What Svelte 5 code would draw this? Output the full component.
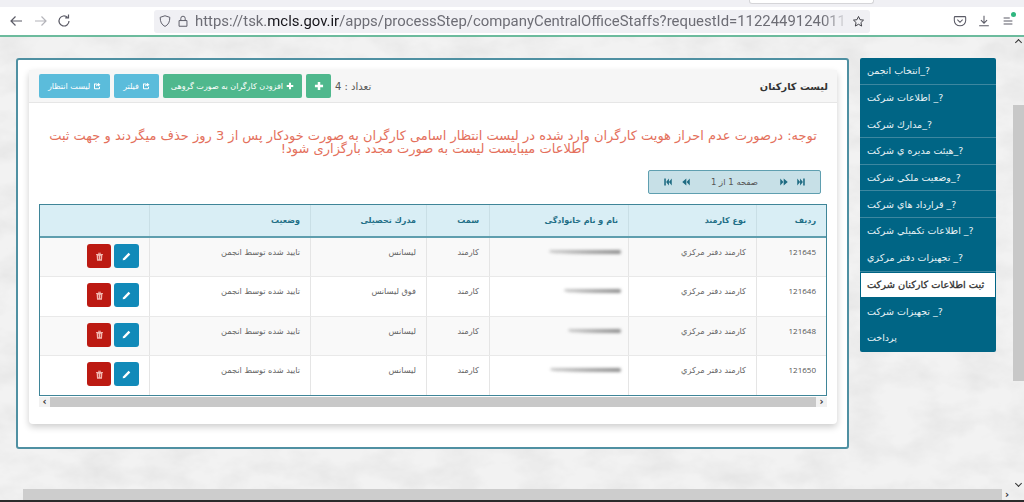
<script lang="ts">
  type Staff = {
    id: number;
    job: string;
    role: string;
    degree: string;
    status: string;
    blur: string;
  };

  const steps = [
    { label: "?_انتخاب انجمن" },
    { label: "?_ اطلاعات شركت" },
    { label: "?_مدارك شركت" },
    { label: "?_هيئت مديره ي شركت" },
    { label: "?_وضعيت ملكي شركت" },
    { label: "?_ قرارداد هاي شركت" },
    { label: "?_ اطلاعات تكميلي شركت" },
    { label: "?_ تجهيزات دفتر مركزي" },
    { label: "ثبت اطلاعات كاركنان شركت", active: true },
    { label: "?_ تجهيزات شركت" },
    { label: "پرداخت" },
  ];

  const staff: Staff[] = [
    { id: 121645, job: "كارمند دفتر مركزي", role: "كارمند", degree: "ليسانس", status: "تاييد شده توسط انجمن", blur: "name-a" },
    { id: 121646, job: "كارمند دفتر مركزي", role: "كارمند", degree: "فوق ليسانس", status: "تاييد شده توسط انجمن", blur: "name-b" },
    { id: 121648, job: "كارمند دفتر مركزي", role: "كارمند", degree: "ليسانس", status: "تاييد شده توسط انجمن", blur: "name-c" },
    { id: 121650, job: "كارمند دفتر مركزي", role: "كارمند", degree: "ليسانس", status: "تاييد شده توسط انجمن", blur: "name-d" },
  ];
</script>

{#snippet share()}
  <svg class="fa" viewBox="0 0 16 16" aria-hidden="true">
    <path d="M2.500 3h6v2H4v7.500h8V9.500h2v3.200c0 .9-.8 1.800-1.800 1.800H3.800C2.800 14.500 2 13.700 2 12.700V4.500C2 3.600 2 3 2.500 3z" fill="currentColor" />
    <path d="M10 1.500l5 3.800-5 3.800V6.900C8 6.900 6.800 7.600 6 9.300c0-3 1.500-5.100 4-5.300z" fill="currentColor" />
  </svg>
{/snippet}

{#snippet plus()}
  <svg class="fa" viewBox="0 0 16 16" aria-hidden="true">
    <path d="M6 1.500h4V6h4.500v4H10v4.500H6V10H1.500V6H6z" fill="currentColor" />
  </svg>
{/snippet}

<div class="screen">
  <header class="browser">
    <div class="tabstrip"><span class="tab-end"></span></div>
    <div class="toolbar">
      <svg class="nav" viewBox="0 0 16 16" aria-hidden="true">
        <path d="M14 8H3M7.500 3.500L3 8l4.500 4.500" stroke="#5b5b66" />
      </svg>
      <svg class="nav next" viewBox="0 0 16 16" aria-hidden="true">
        <path d="M2 8h11M8.500 3.500L13 8l-4.500 4.500" stroke="#b4b4ba" />
      </svg>
      <svg class="nav reload" viewBox="0 0 16 16" aria-hidden="true">
        <path d="M13 8a5 5 0 1 1-1.600-3.700M12.500 1.500v3.300H9.200" stroke="#5b5b66" />
      </svg>
      <div class="urlbar">
        <svg class="url-icon" viewBox="0 0 16 16" aria-hidden="true">
          <path d="M8 2l5.500 1.800c0 5-1.500 8.500-5.500 10.400C4 12.300 2.500 8.800 2.500 3.800z" stroke="#5b5b66" />
        </svg>
        <svg class="url-icon" viewBox="0 0 16 16" aria-hidden="true">
          <path d="M3.500 7.500h9v6.500h-9zM5.500 7.500V5a2.500 2.500 0 0 1 5 0v2.500" stroke="#5b5b66" />
        </svg>
        <div class="url">https://tsk.<b>mcls.gov.ir</b>/apps/processStep/companyCentralOfficeStaffs?requestId=1122449124011</div>
        <svg class="url-star" viewBox="0 0 16 16" aria-hidden="true">
          <path d="M8 1.800l1.900 4 4.300.5-3.200 3 .9 4.300L8 11.400l-3.900 2.200.9-4.300-3.200-3 4.300-.5z" stroke="#3f3f46" />
        </svg>
      </div>
      <div class="tools">
        <svg class="nav" viewBox="0 0 16 16" aria-hidden="true">
          <path d="M2.500 3h11c.6 0 1 .4 1 1v3.500c0 3.300-3 6-6.500 6s-6.500-2.700-6.500-6V4c0-.6.400-1 1-1zM5 6.500L8 9.500l3-3" stroke="#5b5b66" />
        </svg>
        <svg class="nav" viewBox="0 0 16 16" aria-hidden="true">
          <path d="M8 2v8.500M4.500 7L8 10.500 11.500 7M2.500 13.500h11" stroke="#5b5b66" />
        </svg>
        <span class="menu">
          <svg class="nav" viewBox="0 0 16 16" aria-hidden="true">
            <path d="M3 4.500h7M3 8h10M3 11.500h10" stroke="#5b5b66" />
          </svg>
          <i class="dot"></i>
        </span>
      </div>
    </div>
  </header>

  <div class="viewport">
    <svg class="marble" aria-hidden="true">
      <filter id="marble-noise">
        <feTurbulence type="fractalNoise" baseFrequency="0.025 0.04" numOctaves="4" seed="11" />
        <feColorMatrix values="0 0 0 0 0.55  0 0 0 0 0.55  0 0 0 0 0.55  0.45 0 0 0 -0.16" />
      </filter>
      <rect width="100%" height="100%" filter="url(#marble-noise)" />
    </svg>

    <div class="page">
      <main class="panel">
        <section class="card">
          <div class="card-head">
            <h1>ليست كاركنان</h1>
            <div class="actions">
              <span class="count">تعداد : 4</span>
              <button class="btn green square">{@render plus()}</button>
              <button class="btn green">{@render plus()} افزودن كارگران به صورت گروهی</button>
              <button class="btn sky">{@render share()} فیلتر</button>
              <button class="btn sky">{@render share()} لیست انتظار</button>
            </div>
          </div>

          <p class="notice">
            توجه: درصورت عدم احراز هویت كارگران وارد شده در لیست انتظار اسامی كارگران به صورت خودكار پس از 3 روز حذف میگردند و جهت ثبت
            اطلاعات میبایست لیست به صورت مجدد بارگزاری شود!
          </p>

          <div class="pager-row">
            <div class="pager">
              <svg class="pg" viewBox="0 0 16 16" aria-hidden="true"><path d="M2 2.500h2.500v11H2zM5 8l4.500-5.500V8L14 2.500v11L9.500 8v5.500z" transform="matrix(-1 0 0 1 16 0)" /></svg>
              <svg class="pg" viewBox="0 0 16 16" aria-hidden="true"><path d="M2 2.500L7 8l-5 5.500zM7.500 2.500L14 8l-6.500 5.500z" /></svg>
              <span class="pg-text">صفحه 1 از 1</span>
              <svg class="pg" viewBox="0 0 16 16" aria-hidden="true"><path d="M14 2.500L9 8l5 5.500zM8.500 2.500L2 8l6.500 5.500z" /></svg>
              <svg class="pg" viewBox="0 0 16 16" aria-hidden="true"><path d="M2 2.500h2.500v11H2zM5 8l4.500-5.500V8L14 2.500v11L9.500 8v5.500z" /></svg>
            </div>
          </div>

          <div class="table-wrap">
            <table>
              <thead>
                <tr>
                  <th class="c-id">ردیف</th>
                  <th class="c-job">نوع كارمند</th>
                  <th class="c-name">نام و نام خانوادگی</th>
                  <th class="c-role">سمت</th>
                  <th class="c-degree">مدرك تحصیلی</th>
                  <th class="c-status">وضعیت</th>
                  <th></th>
                </tr>
              </thead>
              <tbody>
                {#each staff as row}
                  <tr>
                    <td class="num">{row.id}</td>
                    <td>{row.job}</td>
                    <td class="name-cell"><span class="smudge {row.blur}"></span></td>
                    <td>{row.role}</td>
                    <td>{row.degree}</td>
                    <td>{row.status}</td>
                    <td class="ops">
                      <div class="op-row">
                        <button class="op edit" aria-label="edit">
                          <svg viewBox="0 0 16 16" aria-hidden="true"><path d="M11 2.500l2.500 2.500-8 8L2.500 13.500 3 11z" fill="#fff" /></svg>
                        </button>
                        <button class="op del" aria-label="delete">
                          <svg viewBox="0 0 16 16" aria-hidden="true"><path d="M3 4.500h10v1.200h-.8l-.6 8.300H4.400l-.6-8.300H3zM6 4V2.500h4V4zM6.300 7v5h.9V7zM8.800 7v5h.9V7z" fill="#f2b8b0" fill-rule="evenodd" /></svg>
                        </button>
                      </div>
                    </td>
                  </tr>
                {/each}
              </tbody>
            </table>
          </div>
          <div class="hscroll">
            <span class="arrow">‹</span>
            <span class="thumb"></span>
            <span class="arrow">›</span>
          </div>
        </section>
      </main>

      <nav class="steps">
        {#each steps as step}
          <div class="step" class:active={step.active}>{step.label}</div>
        {/each}
      </nav>
    </div>

    <aside class="vscroll">
      <span class="v-arrow up"></span>
      <span class="v-thumb"></span>
      <span class="v-arrow down"></span>
    </aside>

    <div class="pagebar">
      <span class="pagebar-thumb"></span>
      <span class="pagebar-arrow">›</span>
    </div>
  </div>
  <div class="taskbar"></div>
</div>

<style>
  :global(body) {
    margin: 0;
    background: #f0f0f0;
  }

  .screen {
    width: 1024px;
    height: 502px;
    display: flex;
    flex-direction: column;
    overflow: hidden;
    font-family: "DejaVu Sans", "Noto Sans", sans-serif;
  }

  .browser {
    flex: none;
    height: 37px;
    background: #fff;
    border-bottom: 2px solid #6cbb9d;
    box-sizing: border-box;
  }

  .tabstrip {
    height: 7px;
    background: #f0f0f4;
    position: relative;
  }

  .tab-end {
    position: absolute;
    left: 749px;
    top: 0;
    width: 123px;
    height: 3px;
    background: #fff;
    border: 1px solid #d5d5d8;
    border-top: 0;
    border-radius: 0 0 3px 3px;
  }

  .toolbar {
    height: 28px;
    display: flex;
    align-items: center;
    padding-left: 8px;
  }

  .nav {
    width: 16px;
    height: 16px;
    fill: none;
    stroke-width: 1.2;
    flex: none;
  }

  .next {
    margin-left: 9px;
  }

  .reload {
    margin-left: 7px;
  }

  .urlbar {
    width: 716px;
    height: 23px;
    margin-left: 82px;
    background: #f0f0f4;
    display: flex;
    align-items: center;
    padding-left: 4px;
    box-sizing: border-box;
    border-radius: 3px;
  }

  .url-icon {
    width: 14px;
    height: 14px;
    fill: none;
    stroke-width: 1.1;
    flex: none;
    margin-right: 4px;
  }

  .url {
    font-family: Roboto, sans-serif;
    font-size: 14.900px;
    color: #6d6d75;
    white-space: nowrap;
    width: 654px;
    flex: none;
    margin-left: 1px;
    -webkit-mask-image: linear-gradient(to right, #000 96%, transparent);
    mask-image: linear-gradient(to right, #000 96%, transparent);
  }

  .url b {
    font-weight: 400;
    color: #15141a;
  }

  .url-star {
    width: 13px;
    height: 13px;
    fill: none;
    stroke-width: 1.2;
    margin-left: 3px;
    flex: none;
  }

  .tools {
    display: flex;
    gap: 10px;
    margin-left: 83px;
  }

  .tools .nav {
    width: 14px;
    height: 14px;
  }

  .menu {
    position: relative;
    display: flex;
  }

  .dot {
    position: absolute;
    right: -1px;
    top: -2px;
    width: 5px;
    height: 5px;
    border-radius: 50%;
    background: #2fb67f;
  }

  .viewport {
    flex: 1;
    position: relative;
    background: #f2f2f2;
    overflow: hidden;
  }

  .marble {
    position: absolute;
    inset: 0;
    width: 100%;
    height: 100%;
  }

  .page {
    position: relative;
    display: flex;
    align-items: flex-start;
    padding: 21px 0 0 16px;
    gap: 11px;
  }

  .panel {
    width: 833px;
    height: 391px;
    box-sizing: border-box;
    background: #fff;
    border: 2px solid #4f90a2;
    border-radius: 3px;
    padding: 10px 10px 0 11px;
  }

  .card {
    width: 808px;
    height: 354px;
    box-sizing: border-box;
    background: #fff;
    border-radius: 4px;
    box-shadow: 0 3px 7px rgba(0, 0, 0, 0.2);
    direction: rtl;
  }

  .card-head {
    height: 33px;
    background: #f6f6f6;
    border-bottom: 1px solid #e6e6e6;
    display: flex;
    align-items: center;
    justify-content: space-between;
    padding: 0 9px 0 10px;
    box-sizing: border-box;
  }

  h1 {
    margin: 0;
    font-size: 9.800px;
    font-weight: 700;
    color: #333;
  }

  .actions {
    display: flex;
    align-items: center;
    gap: 4px;
  }

  .count {
    font-size: 10px;
    color: #555;
  }

  .btn {
    height: 24px;
    border: 0;
    border-radius: 2px;
    padding: 0 8px;
    color: #fff;
    font: 8px "DejaVu Sans", sans-serif;
    display: flex;
    align-items: center;
    gap: 3px;
    white-space: nowrap;
  }

  .btn .fa {
    width: 8px;
    height: 8px;
  }

  .btn.square {
    width: 25px;
    padding: 0;
    justify-content: center;
  }

  .btn.square .fa {
    width: 10px;
    height: 10px;
  }

  .green {
    background: #4fb88d;
  }

  .btn.sky {
    background: #5bbcdb;
    padding: 0 9px;
  }

  .notice {
    margin: 27px 18px 0;
    font-size: 13px;
    line-height: 12.500px;
    color: #e4705c;
    text-align: center;
  }

  .pager-row {
    display: flex;
    margin: 15px 16px 0 0;
  }

  .pager {
    width: 173px;
    height: 24px;
    box-sizing: border-box;
    background: #c7e0e7;
    border: 1px solid #5f9fb0;
    border-radius: 2px;
    display: flex;
    align-items: center;
    padding: 0 14px;
    justify-content: space-between;
  }

  .pg {
    width: 10px;
    height: 10px;
    fill: #1e6b82;
  }

  .pg-text {
    width: 73px;
    text-align: center;
    font-size: 8.500px;
    color: #555;
  }

  .table-wrap {
    margin: 10px 10px 0;
    border: 1px solid #3f8598;
    border-top-width: 1.500px;
    border-bottom-width: 1.500px;
  }

  table {
    width: 100%;
    border-collapse: collapse;
    table-layout: fixed;
    font-size: 8.200px;
    color: #666;
  }

  th {
    height: 31px;
    background: #d9eef5;
    color: #1f6f86;
    font-weight: 700;
    font-size: 8px;
    text-align: right;
    padding: 0 10px;
    border-left: 1px solid #c9dfe6;
    border-bottom: 2px solid #5f9eae;
  }

  td {
    height: 39.500px;
    box-sizing: border-box;
    padding: 9px 10px 0;
    vertical-align: top;
    border-left: 1px solid #e5e5e5;
    border-bottom: 1px solid #e9e9e9;
    line-height: 10px;
  }

  th:last-child,
  td:last-child {
    border-left: 0;
  }

  tbody tr:nth-child(odd) td {
    background: #f9f9f9;
  }

  tbody tr:last-child td {
    border-bottom: 0;
  }

  .c-id {
    width: 49px;
  }

  .c-job {
    width: 107px;
  }

  .c-name {
    width: 118px;
  }

  .c-role {
    width: 42px;
  }

  .c-degree {
    width: 95px;
  }

  .c-status {
    width: 140px;
  }

  .num {
    font-family: "Open Sans", sans-serif;
    font-size: 8px;
    color: #555;
  }

  td.name-cell {
    padding-right: 7px;
  }

  td.ops {
    padding: 6px 10px 0 0;
  }

  .op-row {
    display: flex;
    gap: 3px;
  }

  .op {
    display: flex;
    align-items: center;
    justify-content: center;
    border: 0;
    padding: 0;
    width: 25px;
    height: 24px;
    border-radius: 3px;
  }

  .op svg {
    width: 11px;
    height: 11px;
  }

  .edit {
    background: #118ab9;
  }

  .op.del {
    background: #bc1a12;
    width: 24px;
  }

  .smudge {
    display: block;
    height: 4px;
    margin-top: 3px;
    background: linear-gradient(to left, #8f8f8f, #c9c9c9);
    border-radius: 2px 2px 2px 60%;
    filter: blur(1.500px);
  }

  .name-a {
    width: 72px;
  }

  .name-b {
    width: 57px;
  }

  .name-c {
    width: 53px;
  }

  .name-d {
    width: 71px;
  }

  .hscroll {
    direction: ltr;
    margin: 1px 10px 0;
    height: 10px;
    display: flex;
    align-items: center;
    color: #333;
    font: 700 10px/10px "DejaVu Sans", sans-serif;
  }

  .arrow {
    width: 11px;
    height: 10px;
    text-align: center;
    background: #f1f1f1;
  }

  .thumb {
    flex: 1;
    height: 10px;
    background: #c8c8c8;
  }

  .steps {
    width: 136px;
    direction: rtl;
    background: #006585;
    border-radius: 2px;
    overflow: hidden;
  }

  .step {
    height: 26.700px;
    box-sizing: border-box;
    padding: 0 7px;
    display: flex;
    align-items: center;
    justify-content: flex-end;
    color: #e9f3f6;
    font-size: 9.500px;
    white-space: nowrap;
    border-bottom: 1px solid #3d87a0;
  }

  .step:nth-child(2),
  .step:nth-child(7),
  .step:nth-child(10),
  .step:last-child {
    border-bottom-color: transparent;
  }

  .step.active {
    background: #fff;
    color: #333;
    font-size: 9.800px;
    -webkit-text-stroke: 0.3px #333;
    border: 1px solid #006585;
    padding: 0 6px;
  }

  .vscroll {
    position: absolute;
    right: 0;
    top: 0;
    bottom: 12px;
    width: 11px;
  }

  .v-thumb {
    position: absolute;
    left: 0;
    top: 68px;
    width: 11px;
    height: 276px;
    background: #c8c8c8;
  }

  .v-arrow {
    position: absolute;
    left: 3px;
    width: 4px;
    height: 4px;
    border-left: 1.500px solid #333;
    border-top: 1.500px solid #333;
  }

  .up {
    top: 3px;
    transform: rotate(45deg);
  }

  .down {
    top: 444px;
    transform: rotate(225deg);
  }

  .pagebar {
    position: absolute;
    left: 0;
    right: 0;
    bottom: 0;
    height: 11px;
    display: flex;
    align-items: center;
    font: 700 10px/10px "DejaVu Sans", sans-serif;
    color: #333;
  }

  .pagebar-thumb {
    margin-left: 23px;
    width: 979px;
    height: 11px;
    background: #cdcdcd;
  }

  .pagebar-arrow {
    margin-left: 3px;
  }

  .taskbar {
    flex: none;
    height: 2px;
    background: #2b2b2b;
  }
</style>
